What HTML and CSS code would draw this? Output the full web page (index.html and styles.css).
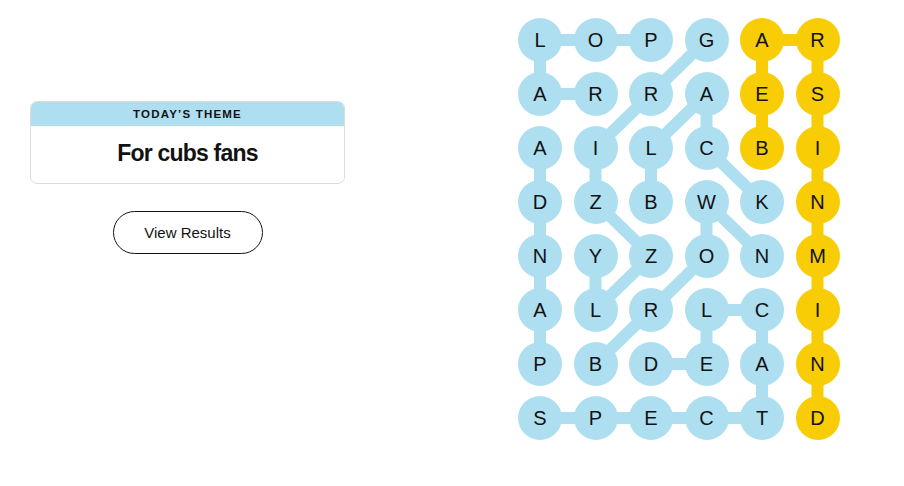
FILE: index.html
```html
<!DOCTYPE html>
<html lang="en">
<head>
<meta charset="utf-8">
<title>Strands</title>
<link rel="stylesheet" href="styles.css">
</head>
<body>
<main class="game">
  <section class="info">
    <div class="theme-card">
      <div class="theme-head">TODAY’S THEME</div>
      <div class="theme-body">For cubs fans</div>
    </div>
    <button class="results-btn" type="button">View Results</button>
  </section>
  <section class="board">
    <svg class="links" width="322" height="422" viewBox="0 0 322 422" aria-hidden="true">
      <g class="blue-links">
        <polyline points="133,22 77.5,22 22,22 22,76 77.5,76"/>
        <polyline points="188.5,22 133,76 77.5,130 77.5,184 133,238 77.5,292 77.5,238"/>
        <polyline points="133,184 133,130 188.5,76 188.5,130 244,184"/>
        <polyline points="77.5,346 133,292 188.5,238 188.5,184 244,238"/>
        <polyline points="22,346 22,292 22,238 22,184 22,130"/>
        <polyline points="22,400 77.5,400 133,400 188.5,400 244,400 244,346 244,292 188.5,292 188.5,346 133,346"/>
      </g>
      <g class="gold-links">
        <polyline points="244,130 244,76 244,22 299.5,22 299.5,76 299.5,130 299.5,184 299.5,238 299.5,292 299.5,346 299.5,400"/>
      </g>
    </svg>
    <div class="grid">
      <span class="cell">L</span><span class="cell">O</span><span class="cell">P</span><span class="cell">G</span><span class="cell gold">A</span><span class="cell gold">R</span>
      <span class="cell">A</span><span class="cell">R</span><span class="cell">R</span><span class="cell">A</span><span class="cell gold">E</span><span class="cell gold">S</span>
      <span class="cell">A</span><span class="cell">I</span><span class="cell">L</span><span class="cell">C</span><span class="cell gold">B</span><span class="cell gold">I</span>
      <span class="cell">D</span><span class="cell">Z</span><span class="cell">B</span><span class="cell">W</span><span class="cell">K</span><span class="cell gold">N</span>
      <span class="cell">N</span><span class="cell">Y</span><span class="cell">Z</span><span class="cell">O</span><span class="cell">N</span><span class="cell gold">M</span>
      <span class="cell">A</span><span class="cell">L</span><span class="cell">R</span><span class="cell">L</span><span class="cell">C</span><span class="cell gold">I</span>
      <span class="cell">P</span><span class="cell">B</span><span class="cell">D</span><span class="cell">E</span><span class="cell">A</span><span class="cell gold">N</span>
      <span class="cell">S</span><span class="cell">P</span><span class="cell">E</span><span class="cell">C</span><span class="cell">T</span><span class="cell gold">D</span>
    </div>
  </section>
</main>
</body>
</html>
```

FILE: styles.css
```css
* { box-sizing: border-box; }

html, body {
  margin: 0;
  padding: 0;
  background: #ffffff;
  color: #121212;
  font-family: "Liberation Sans", Arial, sans-serif;
}

.game {
  display: flex;
  align-items: flex-start;
  width: 904px;
  height: 486px;
}

.info {
  display: flex;
  flex-direction: column;
  align-items: center;
  width: 315px;
  margin-left: 30px;
  padding-top: 101px;
}

.theme-card {
  width: 100%;
  border: 1px solid #dcdcdc;
  border-radius: 7px;
  overflow: hidden;
}

.theme-head {
  height: 24px;
  background: #aedff0;
  text-align: center;
  font-size: 11.5px;
  font-weight: 700;
  letter-spacing: 1.2px;
  line-height: 24px;
  color: #121212;
}

.theme-body {
  height: 57px;
  text-align: center;
  font-size: 23px;
  font-weight: 700;
  letter-spacing: -0.8px;
  line-height: 55px;
  color: #121212;
}

.results-btn {
  margin-top: 27px;
  width: 150px;
  height: 43px;
  border: 1px solid #121212;
  border-radius: 22px;
  background: #ffffff;
  font-family: "Liberation Sans", Arial, sans-serif;
  font-size: 15px;
  color: #121212;
  padding: 0;
}

.board {
  position: relative;
  margin-left: 173px;
  margin-top: 18px;
}

.links {
  position: absolute;
  left: 0;
  top: 0;
}

.links polyline {
  fill: none;
  stroke-width: 12;
  stroke-linejoin: round;
}

.blue-links polyline { stroke: #aedff0; }
.gold-links polyline { stroke: #f8cd05; }

.grid {
  position: relative;
  display: grid;
  grid-template-columns: repeat(6, 44px);
  grid-auto-rows: 44px;
  column-gap: 11.5px;
  row-gap: 10px;
}

.cell {
  display: flex;
  align-items: center;
  justify-content: center;
  width: 44px;
  height: 44px;
  border-radius: 50%;
  background: #aedff0;
  font-size: 20px;
  color: #121212;
}

.cell.gold { background: #f8cd05; }
```
